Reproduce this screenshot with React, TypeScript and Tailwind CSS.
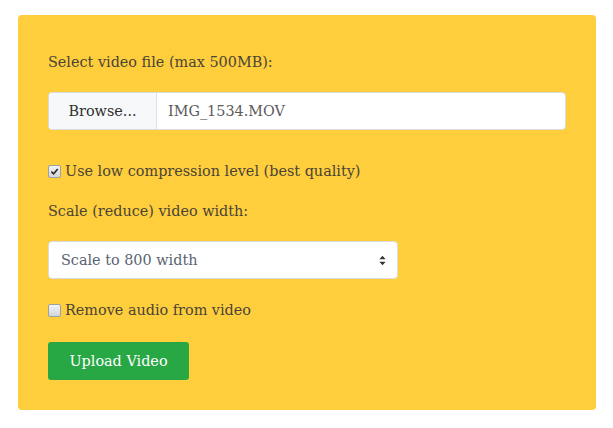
const serif = { fontFamily: '"DejaVu Serif", "Liberation Serif", serif' };

const Checkbox = ({ checked }: { checked?: boolean }) => (
  <span className="inline-flex h-[13px] w-[13px] shrink-0 items-center justify-center rounded-[2px] border border-[#9aa0a8] bg-gradient-to-b from-[#f2f3f5] to-[#d3d6db]">
    {checked && (
      <svg viewBox="0 0 10 10" className="h-[9px] w-[9px]">
        <path d="M1.5 5.2 L4 7.6 L8.6 2.2" fill="none" stroke="#2b2b2b" strokeWidth="1.8" />
      </svg>
    )}
  </span>
);

export default function App() {
  return (
    <div className="min-h-[428px] w-[613px] bg-white pt-[15px] pl-[18px]" style={serif}>
      <div className="flex w-[578px] flex-col items-start rounded-[4px] bg-[#ffce3d] px-[30px] pt-[35px] pb-[30px] text-[14.4px] leading-[24px] text-[#4a4436]">
        <p>Select video file (max 500MB):</p>

        <div className="mt-[18px] flex h-[38px] w-[518px] overflow-hidden rounded-[4px] border border-[#d9dcdf] bg-white">
          <div className="flex w-[108px] items-center justify-center border-r border-[#dfe2e5] bg-[#f6f8fa] text-[#2f2f2f]">
            Browse...
          </div>
          <div className="flex items-center pl-[11px] text-[#5b5b5b]">IMG_1534.MOV</div>
        </div>

        <label className="mt-[29px] flex items-center gap-[4px]">
          <Checkbox checked />
          <span>Use low compression level (best quality)</span>
        </label>

        <p className="mt-[16px]">Scale (reduce) video width:</p>

        <div className="mt-[18px] flex h-[38px] w-[350px] items-center justify-between rounded-[4px] border border-[#d9dcdf] bg-white pr-[11px] pl-[12px] text-[#596370]">
          <span>Scale to 800 width</span>
          <svg viewBox="0 0 8 12" className="h-[11px] w-[7px]">
            <path d="M4 0.5 L7.5 4.5 L0.5 4.5 Z M4 11.5 L7.5 7.5 L0.5 7.5 Z" fill="#333" />
          </svg>
        </div>

        <label className="mt-[19px] flex items-center gap-[4px]">
          <Checkbox />
          <span>Remove audio from video</span>
        </label>

        <button className="mt-[20px] h-[38px] w-[141px] rounded-[3px] bg-[#28a745] text-[14.4px] text-white">
          Upload Video
        </button>
      </div>
    </div>
  );
}
